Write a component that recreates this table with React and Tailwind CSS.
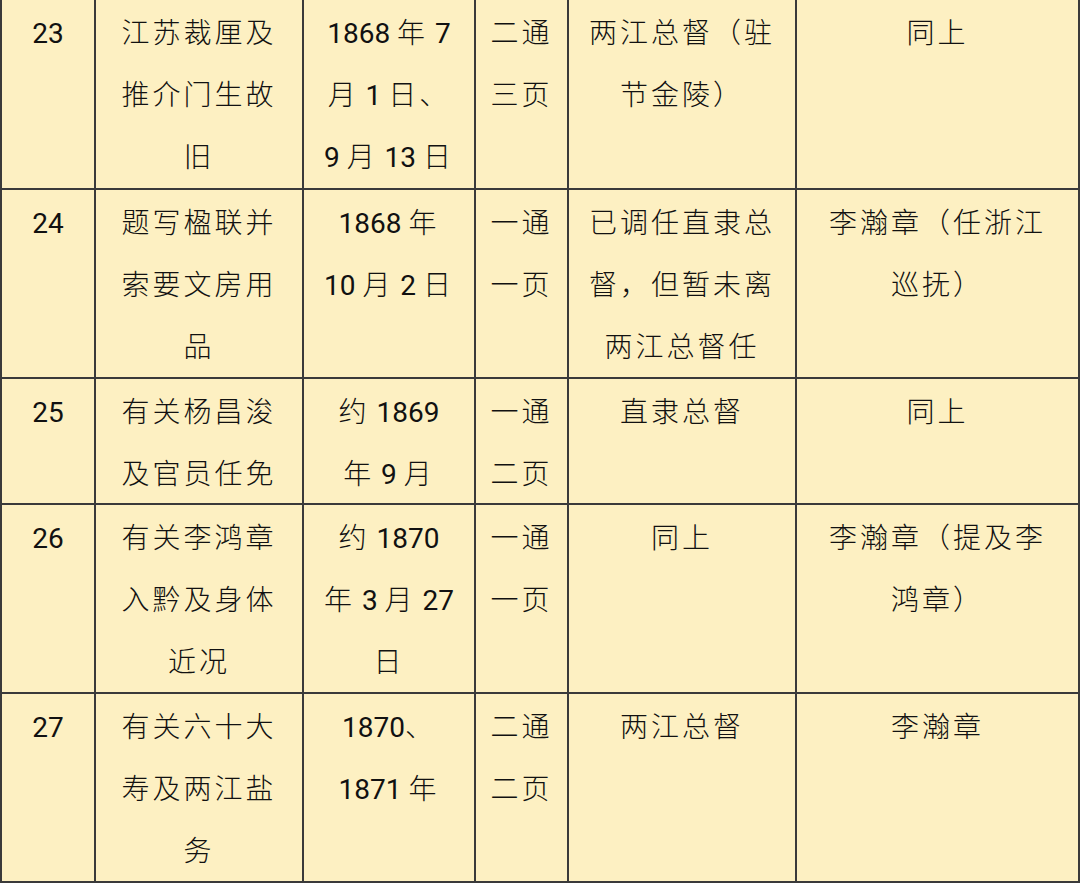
import React from "react";

const rows = [
  {
    h: "h-[190px]",
    cells: [
      ["23"],
      ["江苏裁厘及", "推介门生故", "旧"],
      ["1868 年 7", "月 1 日、", "9 月 13 日"],
      ["二通", "三页"],
      ["两江总督（驻", "节金陵）"],
      ["同上"],
    ],
  },
  {
    h: "h-[189px]",
    cells: [
      ["24"],
      ["题写楹联并", "索要文房用", "品"],
      ["1868 年", "10 月 2 日"],
      ["一通", "一页"],
      ["已调任直隶总", "督，但暂未离", "两江总督任"],
      ["李瀚章（任浙江", "巡抚）"],
    ],
  },
  {
    h: "h-[126px]",
    cells: [
      ["25"],
      ["有关杨昌浚", "及官员任免"],
      ["约 1869", "年 9 月"],
      ["一通", "二页"],
      ["直隶总督"],
      ["同上"],
    ],
  },
  {
    h: "h-[189px]",
    cells: [
      ["26"],
      ["有关李鸿章", "入黔及身体", "近况"],
      ["约 1870", "年 3 月 27", "日"],
      ["一通", "一页"],
      ["同上"],
      ["李瀚章（提及李", "鸿章）"],
    ],
  },
  {
    h: "h-[189px]",
    cells: [
      ["27"],
      ["有关六十大", "寿及两江盐", "务"],
      ["1870、", "1871 年"],
      ["二通", "二页"],
      ["两江总督"],
      ["李瀚章"],
    ],
  },
];

const widths = [
  "w-[94px]",
  "w-[208px]",
  "w-[172px]",
  "w-[93px]",
  "w-[228px]",
  "w-[283px]",
];

function Line({ text }) {
  const parts = text.split(/([\u0000-\u00ff]+)/).filter((p) => p.length);
  return (
    <div className="h-[62px] leading-[62px] whitespace-pre">
      {parts.map((p, i) =>
        /^[\u0000-\u00ff]+$/.test(p) ? (
          <span
            key={i}
            className="leading-none tracking-normal font-normal font-['Roboto','Noto_Sans_CJK_SC',sans-serif]"
          >
            {p}
          </span>
        ) : (
          <span key={i} className="tracking-[3px]">
            {p}
          </span>
        )
      )}
    </div>
  );
}

export default function App() {
  return (
    <div className="w-[1080px] h-[883px] bg-[#fdf0c2] overflow-hidden font-['Noto_Sans_CJK_SC',sans-serif] font-light text-[28px] text-[#111]">
      <div className="flex flex-col border-l-2 border-[#3a3a3a]">
        {rows.map((r, ri) => (
          <div key={ri} className={`flex ${r.h} border-b-2 border-[#3a3a3a]`}>
            {r.cells.map((c, ci) => (
              <div
                key={ci}
                className={`${widths[ci]} shrink-0 border-r-2 border-[#3a3a3a] flex flex-col items-center`}
              >
                {c.map((t, ti) => (
                  <Line key={ti} text={t} />
                ))}
              </div>
            ))}
          </div>
        ))}
      </div>
    </div>
  );
}
